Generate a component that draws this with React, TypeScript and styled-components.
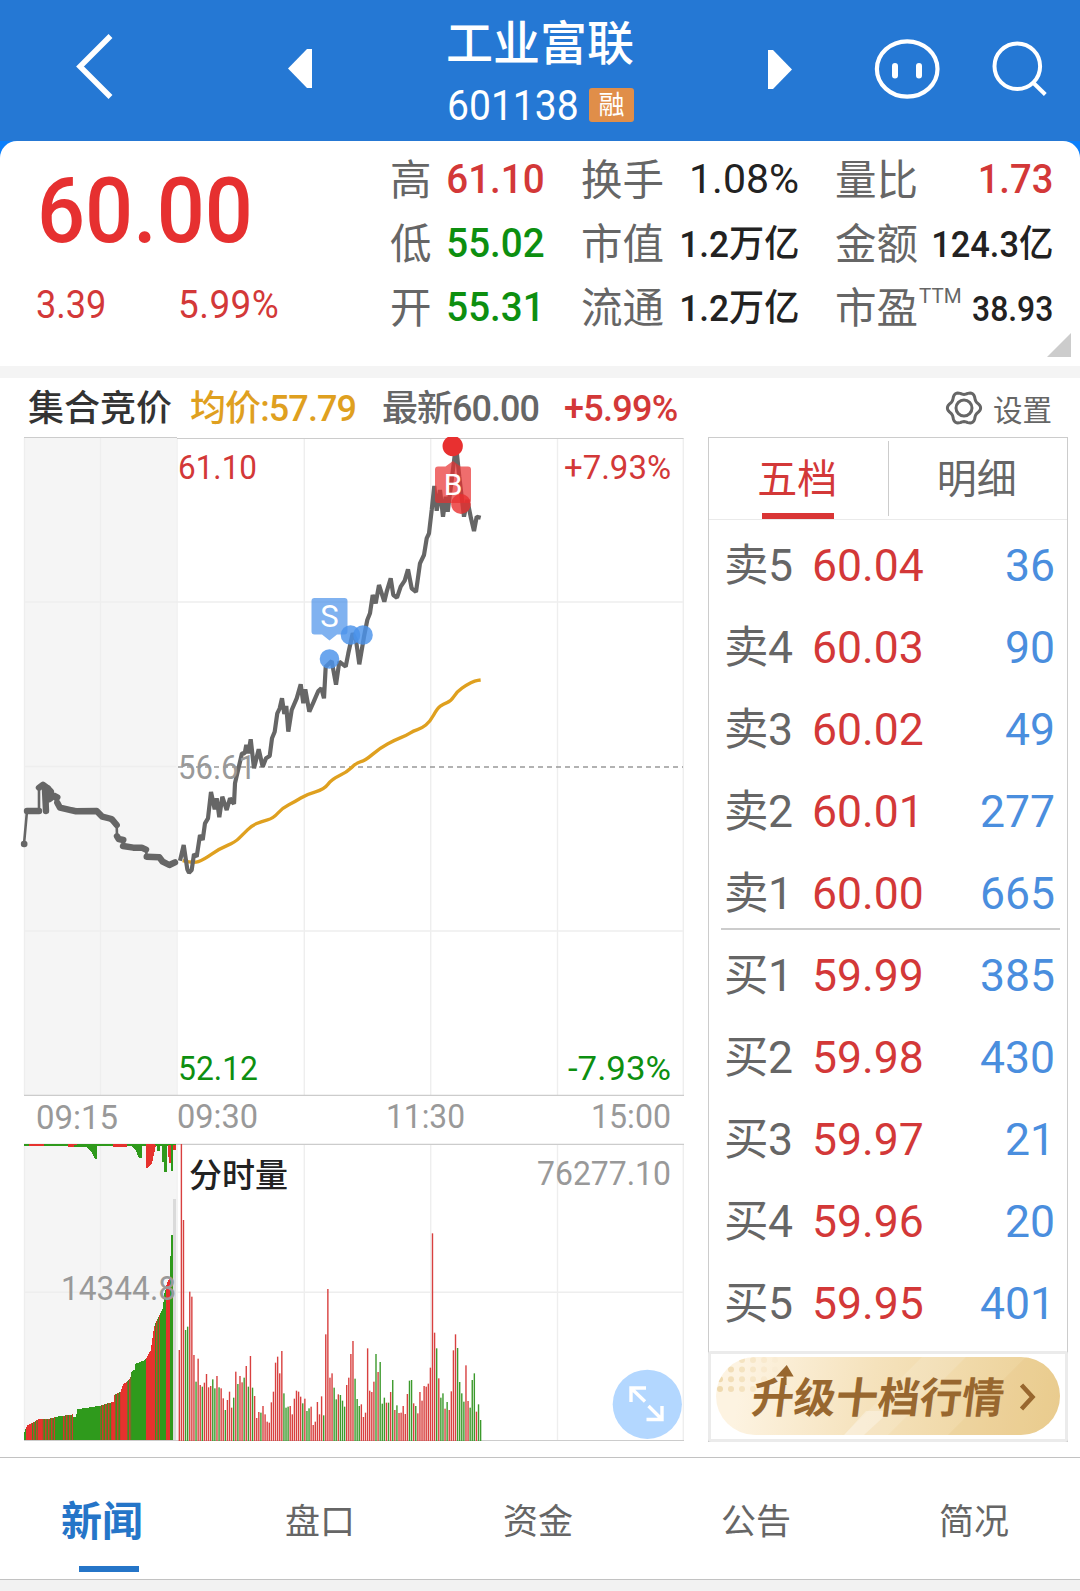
import React from "react";
import styled, { createGlobalStyle } from "styled-components";

const FONT = `Roboto, "Noto Sans CJK SC", sans-serif`;
const C = {
  red: "#d33838",
  green: "#0d8f10",
  ink: "#222",
  grey: "#666",
  soft: "#999",
  line: "#ccc",
  grid: "#eee",
  gold: "#dfa01f",
  blue: "#4a8ede",
};

const Global = createGlobalStyle`
  html, body { margin: 0; padding: 0; background: #fff; }
  * { box-sizing: border-box; }
`;

const Page = styled.div`
  width: 1080px;
  height: 1591px;
  display: flex;
  flex-direction: column;
  overflow: hidden;
  background: #fff;
  font-family: ${FONT};
`;

/* ---------- header ---------- */
const Header = styled.header`
  height: 141px;
  flex: none;
  display: flex;
  background: #2578d4;
`;
const HeadIcon = styled.svg<{ $w: number; $ml: number }>`
  width: ${(p) => p.$w}px;
  height: 141px;
  margin-left: ${(p) => p.$ml}px;
  flex: none;
  overflow: visible;
  fill: none;
  stroke: #fff;
`;
const TitleBlock = styled.div`
  width: 190px;
  margin-left: 134px;
  flex: none;
  color: #fff;
`;
const Title = styled.h1`
  margin: 14px 0 0;
  font-size: 47px;
  line-height: 60px;
  font-weight: 500;
  white-space: nowrap;
`;
const CodeRow = styled.div`
  display: flex;
  align-items: center;
  justify-content: space-between;
  height: 34px;
  margin-top: 14px;
  padding-left: 1px;
  width: 188px;
`;
const Badge = styled.span`
  width: 45px;
  height: 34px;
  border-radius: 3px;
  background: #e08e49;
  font-size: 26px;
  line-height: 35px;
  text-align: center;
`;

const Num = styled.span<{
  $size: number;
  $sx?: number;
  $color?: string;
  $weight?: number;
  $right?: boolean;
  $ls?: number;
}>`
  display: inline-block;
  white-space: nowrap;
  font-size: ${(p) => p.$size}px;
  font-weight: ${(p) => p.$weight ?? 500};
  color: ${(p) => p.$color ?? "inherit"};
  letter-spacing: ${(p) => p.$ls ?? 0}px;
  transform: scaleX(${(p) => p.$sx ?? 0.93});
  transform-origin: ${(p) => (p.$right ? "right" : "left")} center;
`;

/* ---------- quote ---------- */
const QuoteBack = styled.section`
  flex: none;
  height: 237px;
  background: linear-gradient(#0a7ffb 40px, #f4f4f4 40px);
`;
const Quote = styled.div`
  position: relative;
  height: 225px;
  display: flex;
  background: #fff;
  border-radius: 17px 17px 0 0;
`;
const PriceBlock = styled.div`
  width: 390px;
  flex: none;
  padding: 26px 0 0 36px;
`;
const BigPrice = styled.div`
  height: 90px;
  line-height: 90px;
  padding-left: 1px;
`;
const ChangeRow = styled.div`
  display: flex;
  margin-top: 29px;
  line-height: 38px;
`;
const ChangeItem = styled.div`
  width: 142px;
`;
const StatCol = styled.div<{ $w: number; $ml?: number }>`
  width: ${(p) => p.$w}px;
  margin-left: ${(p) => p.$ml ?? 0}px;
  padding-top: 6px;
  flex: none;
`;
const Stat = styled.div`
  height: 64px;
  line-height: 64px;
  display: flex;
  align-items: baseline;
  justify-content: space-between;
`;
const StatLabel = styled.span`
  font-size: 41.5px;
  color: ${C.grey};
  white-space: nowrap;
  transform: translateY(2px);
`;
const Sup = styled.sup`
  font-size: 20.5px;
  line-height: 0;
  vertical-align: 20px;
  margin-left: 1px;
  margin-right: -60px;
`;
const Corner = styled.svg`
  position: absolute;
  right: 9px;
  bottom: 9px;
  width: 24px;
  height: 24px;
`;

/* ---------- body ---------- */
const Body = styled.main`
  flex: none;
  height: 1079px;
  display: flex;
`;
const ChartSide = styled.div`
  width: 708px;
  flex: none;
`;
const Legend = styled.div`
  height: 60px;
  padding-left: 28px;
  line-height: 62px;
  display: flex;
`;
const LegendItem = styled.div<{ $w: number; $color: string; $weight?: number; $ls?: number }>`
  width: ${(p) => p.$w}px;
  color: ${(p) => p.$color};
  font-size: 36px;
  font-weight: ${(p) => p.$weight ?? 500};
  letter-spacing: ${(p) => p.$ls ?? 0}px;
  white-space: nowrap;
`;
const Chart = styled.svg`
  display: block;
  width: 700px;
  height: 1010px;
  overflow: visible;
  font-family: ${FONT};
`;
const BookSide = styled.div`
  width: 360px;
  flex: none;
`;
const Settings = styled.div`
  height: 59px;
  display: flex;
  align-items: center;
  justify-content: flex-end;
  gap: 10px;
  padding-right: 16px;
  font-size: 29.5px;
  color: ${C.grey};
`;
const Book = styled.div`
  height: 1005px;
  border: 1px solid ${C.line};
  display: flex;
  flex-direction: column;
`;
const BookTabs = styled.div`
  height: 82px;
  display: flex;
  flex: none;
  border-bottom: 1px solid #eaeaea;
`;
const BookTab = styled.div<{ $on?: boolean }>`
  position: relative;
  flex: 1;
  text-align: center;
  font-size: 40px;
  line-height: 84px;
  height: 81px;
  padding-right: 2px;
  color: ${(p) => (p.$on ? C.red : C.grey)};
  &::after {
    content: "";
    position: absolute;
    left: 53px;
    bottom: 0;
    width: 72px;
    height: ${(p) => (p.$on ? 6 : 0)}px;
    background: #d93535;
  }
`;
const TabRule = styled.div`
  width: 1px;
  margin: 3px 0;
  background: ${C.line};
`;
const Rows = styled.div`
  padding-top: 5px;
  height: 832px;
  flex: none;
`;
const Row = styled.div`
  height: 82.05px;
  line-height: 82px;
  padding: 0 12px 0 15px;
  display: grid;
  grid-template-columns: 88px 1fr auto;
  font-size: 44.5px;
  white-space: nowrap;
`;
const Side = styled.span`
  color: ${C.grey};
  letter-spacing: -0.5px;
`;
const Price = styled.span`
  color: ${C.red};
`;
const Vol = styled.span`
  color: ${C.blue};
`;
const Mid = styled.div`
  height: 2px;
  margin: -7px 7px 5px 12px;
  background: ${C.line};
`;
const Promo = styled.div`
  flex: 1;
  margin: -1px;
  border: 3px solid #ebebeb;
  border-radius: 3px;
  padding: 3px 4px 3px 5px;
  display: flex;
`;
const Pill = styled.div`
  position: relative;
  width: 344px;
  height: 78px;
  border-radius: 39px;
  overflow: hidden;
  background: linear-gradient(100deg, #fdf3e1 8%, #f5e2bc 45%, #ebcf93 100%);
`;
const PillArt = styled.svg`
  position: absolute;
  inset: 0;
  width: 344px;
  height: 78px;
`;
const PillText = styled.div`
  position: relative;
  padding-left: 36px;
  font-size: 42px;
  line-height: 83px;
  font-weight: 700;
  color: #98672f;
  white-space: nowrap;
  transform: skewX(-7deg);
`;

/* ---------- bottom tabs ---------- */
const Tabs = styled.nav`
  flex: none;
  height: 123px;
  margin: 0 -4px 0 -7px;
  border-top: 1px solid #c2c2c2;
  border-bottom: 1px solid #c2c2c2;
  display: grid;
  grid-template-columns: repeat(5, 218px);
`;
const Tab = styled.div<{ $on?: boolean }>`
  position: relative;
  height: 121px;
  text-align: center;
  line-height: ${(p) => (p.$on ? 128 : 130)}px;
  font-size: ${(p) => (p.$on ? 41 : 35)}px;
  font-weight: ${(p) => (p.$on ? 700 : 400)};
  color: ${(p) => (p.$on ? "#2575c8" : C.grey)};
  &::after {
    content: "";
    position: absolute;
    left: 86px;
    top: 108px;
    width: 60px;
    height: ${(p) => (p.$on ? 6 : 0)}px;
    background: #2575c8;
  }
`;
const Foot = styled.div`
  flex: 1;
  background: #f2f2f2;
`;

/* ---------- chart data ---------- */
type P = [number, number];
const map = (pts: P[], ox: number, oy: number) =>
  pts.map(([x, y]) => `${(ox + x / 3).toFixed(1)},${(oy + y / 3).toFixed(1)}`).join(" ");
const smooth = (pts: P[], ox: number, oy: number) => {
  const q = pts.map(([x, y]) => [ox + x / 3, oy + y / 3]);
  let d = `M${q[0][0]} ${q[0][1]}`;
  for (let i = 1; i < q.length - 1; i++) {
    d += `Q${q[i][0]} ${q[i][1]} ${(q[i][0] + q[i + 1][0]) / 2} ${(q[i][1] + q[i + 1][1]) / 2}`;
  }
  const e = q[q.length - 1];
  return `${d}L${e[0]} ${e[1]}`;
};

const priceA: P[] = [[0,842],[11,795],[22,868],[27,878],[35,870],[42,822],[50,830],[60,765],[68,780],[75,730],[84,715],[93,636],[104,688],[110,655],[118,712],[127,650],[140,690],[150,655],[162,672],[165,610],[172,580],[186,520],[194,520],[199,495],[205,520],[212,478],[222,565],[236,508],[248,560],[258,535],[269,528],[276,475],[284,455],[292,400],[299,385],[306,355],[313,402],[319,378],[325,455],[335,390],[350,355],[362,313],[370,370],[376,328],[388,395],[400,368],[415,333],[424,325],[432,355],[437,260],[455,243],[468,314],[478,245],[497,260],[505,220],[518,160],[528,180],[538,253],[552,170],[562,120],[570,100],[578,45],[587,70],[597,15],[613,65]];
const priceB: P[] = [[20,665],[32,625],[40,675],[51,683],[62,650],[74,632],[84,598],[95,655],[108,666],[120,580],[132,555],[140,505],[147,490],[155,420],[163,348],[170,422],[180,360],[189,440],[197,380],[203,425],[215,330],[228,225],[238,320],[252,440],[262,390],[273,445],[282,483],[290,440],[302,443]];
const avg: P[] = [[8,842],[40,850],[70,840],[120,805],[165,787],[190,762],[215,737],[245,724],[280,715],[308,683],[345,665],[380,643],[433,628],[455,598],[500,577],[530,548],[555,542],[600,504],[645,480],[680,466],[700,453],[725,445],[750,425],[772,385],[790,372],[812,364],[832,334],[860,315],[885,302],[902,300]];
const preThin: P[] = [[72,312],[81,213],[117,213],[117,143],[129,134],[138,145],[138,213],[148,150],[172,188],[180,203],[290,213],[350,255],[351,289],[369,300],[369,318],[438,329],[440,350],[478,352]];
const preThick: P[][] = [
  [[72,312],[73,312]],
  [[81,213],[117,213]],
  [[117,143],[129,134],[143,145]],
  [[135,150],[138,213]],
  [[143,145],[153,155],[148,178],[162,167],[172,172]],
  [[172,188],[180,203],[228,214],[290,213],[307,230],[335,237],[350,255]],
  [[351,289],[356,297],[370,300]],
  [[369,318],[400,323],[425,323],[438,329]],
  [[440,350],[478,352],[488,365],[508,375],[525,367]],
];

const volume = "810r 192r 420r 750g 740g 635r 650r 825r 905g 836r 915r 920g 908r 882r 922r 918r 898g 925g 888r 922g 925r 955r 990g 960r 935r 983r 953g 875r 912g 888r 907r 893g 858r 920g 828r 923g 948r 1014r 996r 998g 978r 1003r 1025r 1028r 967r 935r 848r 830r 880r 813r 940g 983g 980g 978r 1003r 956r 932r 935r 950r 970g 956r 993g 985g 980r 1035r 1025r 966r 1003r 949r 1006g 763r 627r 893r 880r 923g 958g 943r 945g 962g 980g 915r 893r 822r 783r 896g 957g 978g 973r 1011r 998r 805r 932r 936r 905r 822g 876r 846g 971g 953g 968r 968g 936r 900g 990r 976g 999r 998r 978r 1002r 942r 902g 900g 970r 978g 1000r 936r 962r 918r 920r 911r 863r 460r 758r 805g 895r 953g 940g 986r 966g 990r 934r 811r 763r 804g 906g 940g 965g 856r 963r 983g 900g 880g 995r 973g 1020g"
  .split(" ")
  .map((t, i) => ({ x: 179.3 + i * 2.0925, y: 1080 + parseInt(t, 10) / 3, up: t.endsWith("r") }));

const preTop: P[] = [[73,1055],[80,1037],[90,1032],[115,1018],[140,1018],[170,1010],[218,1003],[219,1010],[228,1010],[231,988],[300,977],[340,965],[342,945],[362,935],[368,915],[390,895],[395,873],[403,870],[405,852],[435,840],[452,810],[462,740],[470,720],[488,685],[493,640],[497,625],[500,610],[510,590],[512,465],[520,465]];
const preSeg: [number, string][] = [[78,"g"],[97,"r"],[115,"m"],[127,"r"],[142,"m"],[165,"m"],[190,"g"],[218,"m"],[300,"g"],[336,"m"],[345,"r"],[362,"m"],[380,"r"],[397,"m"],[438,"g"],[466,"r"],[480,"m"],[497,"g"],[511,"r"],[530,"g"]];
const RED = "#e6322e";
const GREEN = "#2f9a1c";
const preBars = Array.from({ length: 149 }, (_, i) => {
  const X = 73 + i * 3;
  let k = 1;
  while (k < preTop.length - 1 && preTop[k][0] < X) k++;
  const [x0, y0] = preTop[k - 1];
  const [x1, y1] = preTop[k];
  const y = y0 + ((y1 - y0) * (X - x0)) / (x1 - x0 || 1);
  const seg = preSeg.find((s) => X < s[0])![1];
  const fill = seg === "r" ? RED : seg === "g" ? GREEN : i % 3 === 0 ? "#cf3a2a" : i % 3 === 1 ? "#7d6a26" : "#3f8f20";
  return { x: 24 + i, y: 1080 + y / 3, fill };
});

const Label: React.FC<{
  x: number; y: number; w: number; fill: string; size?: number; weight?: number; children: string;
}> = ({ x, y, w, fill, size = 34, weight = 400, children }) => (
  <text x={x} y={y} fontSize={size} fontWeight={weight} fill={fill} textLength={w} lengthAdjust="spacingAndGlyphs">
    {children}
  </text>
);

const gear = Array.from({ length: 96 }, (_, i) => {
  const a = (i / 96) * Math.PI * 2;
  const r = 15.1 + 1.5 * Math.cos(6 * a);
  return `${(19 + r * Math.cos(a)).toFixed(2)},${(19 + r * Math.sin(a)).toFixed(2)}`;
}).join(" ");

const IntradayChart = () => (
  <Chart viewBox="0 438 700 1010">
    <rect x="24" y="437" width="152" height="658" fill="#f5f5f5" />
    <rect x="24" y="1144" width="152" height="296" fill="#f5f5f5" />
    <g stroke={C.grid} strokeWidth="1.4">
      {[24.5, 100.5, 177, 304.3, 430.7, 557.5, 683.3].map((x) => (
        <path key={x} d={`M${x} 438V1095M${x} 1144V1440`} />
      ))}
      <path d="M24 602H683M24 931H683M24 766.5H176M24 1292.3H683" />
    </g>
    <g stroke={C.line} strokeWidth="1.2">
      <path d="M24 437.5H177M177 438.5H683.5M24 1095.4H684M24 1144.4H684M24 1440.5H684" />
    </g>
    <path d="M178 767H683" stroke="#999" strokeWidth="1.6" strokeDasharray="5 4" />

    <g shapeRendering="crispEdges">
      {preBars.map((b) => (
        <rect key={b.x} x={b.x} y={b.y} width="1" height={1440 - b.y} fill={b.fill} />
      ))}
      <rect x="173" y="1199" width="3" height="241" fill="#dadada" />
      <path d="M24 1144H176V1146H24Z" fill={GREEN} />
      <path d="M29 1144H44V1146H29ZM68 1144H77V1147H68ZM113 1144H127V1147H113ZM146 1144H155V1146H146Z" fill={RED} />
      <path d="M74 1145H97V1159H95L91 1151L86 1147H74ZM130 1145H142V1158H139L136 1151L132 1147ZM157 1145H160V1151H157ZM162 1145H167V1172H164V1162H162ZM171 1145H173V1171H171Z" fill={GREEN} />
      <path d="M146 1145H156L152 1163L148 1168H146ZM168 1145H171V1163H169V1157H168ZM173 1145H175.5V1150H173Z" fill={RED} />
    </g>
    {volume.map((v) => (
      <rect key={v.x} x={v.x - 0.7} y={v.y} width="1.4" height={1441 - v.y} fill={v.up ? "#d8403f" : "#3c9a2c"} />
    ))}

    <Label x={178} y={479} w={79} fill={C.red}>61.10</Label>
    <Label x={564} y={479} w={107} fill={C.red}>+7.93%</Label>
    <Label x={178} y={1079.500} w={80} fill={C.green}>52.12</Label>
    <Label x={568} y={1079.500} w={103} fill={C.green}>-7.93%</Label>

    <path d={smooth(avg, 180, 580)} fill="none" stroke={C.gold} strokeWidth="3.4" strokeLinejoin="round" />
    <g fill="none" stroke="#666" strokeLinejoin="round">
      <polyline points={map(preThin, 0, 740)} strokeWidth="2.6" />
      <g strokeWidth="6.4" strokeLinecap="round">
        {preThick.map((p, i) => (
          <polyline key={i} points={map(p, 0, 740)} />
        ))}
      </g>
      <polyline points={`${map(priceA, 180, 580)} ${map(priceB, 380, 370)}`} strokeWidth="4.2" strokeLinejoin="bevel" />
    </g>
    <Label x={178} y={779} w={78} fill={C.soft}>56.61</Label>

    <g fill="#4a92ea">
      <path d="M314.5 598H344.5Q347.5 598 347.5 601V631.5Q347.5 634.5 344.5 634.5H337L329.5 640.5L322 634.5H314.5Q311.5 634.5 311.5 631.5V601Q311.5 598 314.5 598Z" opacity=".7" />
      <circle cx="329.5" cy="659" r="9.8" opacity=".82" />
      <circle cx="350.5" cy="635" r="9.8" opacity=".82" />
      <circle cx="363" cy="635" r="9.8" opacity=".82" />
    </g>
    <text x="329.5" y="627" fontSize="31" fill="#fff" textAnchor="middle">S</text>
    <path d="M447.9 437H457.5A10.2 10.2 0 1 1 447.9 437Z" fill="#e83030" />
    <g fill="#e82f2f">
      <path d="M438 466.5H445.5L453 461L460.5 466.5H468Q471 466.5 471 469.5V500Q471 503 468 503H438Q435 503 435 500V469.5Q435 466.5 438 466.5Z" opacity=".7" />
      <circle cx="461" cy="504" r="9.9" opacity=".8" />
    </g>
    <text x="453" y="495" fontSize="30" fill="#fff" textAnchor="middle">B</text>

    <Label x={36} y={1129} w={82} fill={C.soft}>09:15</Label>
    <Label x={177} y={1128} w={81} fill={C.soft}>09:30</Label>
    <Label x={386} y={1128} w={79} fill={C.soft}>11:30</Label>
    <Label x={591} y={1128} w={80} fill={C.soft}>15:00</Label>
    <Label x={189} y={1186.5} w={99} fill={C.ink} size={33} weight={500}>分时量</Label>
    <Label x={537} y={1185} w={134} fill={C.soft}>76277.10</Label>
    <Label x={61} y={1300} w={115} fill={C.soft}>14344.8</Label>

    <circle cx="647.3" cy="1404.3" r="34.6" fill="#b3d7ff" />
    <path d="M631 1402V1388H646M632 1389L645 1401.5M662 1406V1419.5H646.5M661 1418.5L648.5 1406" stroke="#fff" strokeWidth="3.4" fill="none" />
  </Chart>
);

const orders: [string, string, string][] = [
  ["卖5", "60.04", "36"], ["卖4", "60.03", "90"], ["卖3", "60.02", "49"], ["卖2", "60.01", "277"], ["卖1", "60.00", "665"],
  ["买1", "59.99", "385"], ["买2", "59.98", "430"], ["买3", "59.97", "21"], ["买4", "59.96", "20"], ["买5", "59.95", "401"],
];

const dots = [0, 1, 2, 3].flatMap((r) =>
  Array.from({ length: 6 }, (_, c) => ({ x: 4 + c * 11, y: 32 - r * 9.7, o: 1 - c * 0.18 })),
);

export default function App() {
  return (
    <Page>
      <Global />
      <Header>
        <HeadIcon $w={36} $ml={77} viewBox="77 0 36 141" strokeWidth="5.5">
          <path d="M110.500 36L80 66.500L110.500 97" />
        </HeadIcon>
        <HeadIcon $w={24} $ml={175} viewBox="288 0 24 141">
          <path d="M307 49H312V88H307L288 68.500Z" fill="#fff" stroke="none" />
        </HeadIcon>
        <TitleBlock>
          <Title>工业富联</Title>
          <CodeRow>
            <Num $size={42} $sx={0.93} $weight={400}>601138</Num>
            <Badge>融</Badge>
          </CodeRow>
        </TitleBlock>
        <HeadIcon $w={24} $ml={132} viewBox="768 0 24 141">
          <path d="M768 50H773L792 69.500L773 89H768Z" fill="#fff" stroke="none" />
        </HeadIcon>
        <HeadIcon $w={65} $ml={83} viewBox="875 0 65 141" strokeWidth="4.200">
          <ellipse cx="907.200" cy="69" rx="30.300" ry="27.700" />
          <path d="M895 66V75.500M919 66V75.500" strokeWidth="6" strokeLinecap="round" />
        </HeadIcon>
        <HeadIcon $w={55} $ml={52} viewBox="992 0 55 141" strokeWidth="4">
          <circle cx="1017.300" cy="66.300" r="22.800" />
          <path d="M1033 82.500L1045.300 94.500" />
        </HeadIcon>
      </Header>

      <QuoteBack>
        <Quote>
          <PriceBlock>
            <BigPrice><Num $size={90} $sx={0.94} $color="#e63030">60.00</Num></BigPrice>
            <ChangeRow>
              <ChangeItem><Num $size={38} $sx={0.95} $color={C.red} $weight={400}>3.39</Num></ChangeItem>
              <Num $size={38} $sx={0.97} $ls={0.5} $color={C.red} $weight={400}>5.99%</Num>
            </ChangeRow>
          </PriceBlock>
          <StatCol $w={155}>
            <Stat><StatLabel>高</StatLabel><Num $size={41} $right $sx={0.94} $color={C.red}>61.10</Num></Stat>
            <Stat><StatLabel>低</StatLabel><Num $size={41} $right $sx={0.94} $color={C.green}>55.02</Num></Stat>
            <Stat><StatLabel>开</StatLabel><Num $size={41} $right $sx={0.94} $color={C.green}>55.31</Num></Stat>
          </StatCol>
          <StatCol $w={218} $ml={36}>
            <Stat><StatLabel>换手</StatLabel><Num $size={41} $right $color={C.ink} $weight={400} $sx={1}>1.08%</Num></Stat>
            <Stat><StatLabel>市值</StatLabel><Num $size={37} $right $color={C.ink} $sx={0.95}>1.2万亿</Num></Stat>
            <Stat><StatLabel>流通</StatLabel><Num $size={37} $right $color={C.ink} $sx={0.95}>1.2万亿</Num></Stat>
          </StatCol>
          <StatCol $w={218} $ml={36}>
            <Stat><StatLabel>量比</StatLabel><Num $size={41} $right $color={C.red}>1.73</Num></Stat>
            <Stat><StatLabel>金额</StatLabel><Num $size={37} $right $color={C.ink}>124.3亿</Num></Stat>
            <Stat><StatLabel>市盈<Sup>TTM</Sup></StatLabel><Num $size={35} $right $color={C.ink} $sx={0.91}>38.93</Num></Stat>
          </StatCol>
          <Corner viewBox="0 0 24 24"><path d="M24 0V24H0Z" fill="#ccc" /></Corner>
        </Quote>
      </QuoteBack>

      <Body>
        <ChartSide>
          <Legend>
            <LegendItem $w={162} $color="#333">集合竞价</LegendItem>
            <LegendItem $w={192} $color={C.gold} $ls={-0.9}>均价:57.79</LegendItem>
            <LegendItem $w={182} $color={C.grey} $ls={-1}>最新60.00</LegendItem>
            <LegendItem $w={120} $color={C.red} $ls={-0.7}>+5.99%</LegendItem>
          </Legend>
          <IntradayChart />
        </ChartSide>
        <BookSide>
          <Settings>
            <svg width="38" height="38" fill="none" stroke="#666" strokeWidth="3">
              <polygon points={gear} strokeLinejoin="round" />
              <circle cx="19" cy="19" r="8" />
            </svg>
            <span>设置</span>
          </Settings>
          <Book>
            <BookTabs>
              <BookTab $on>五档</BookTab>
              <TabRule />
              <BookTab>明细</BookTab>
            </BookTabs>
            <Rows>
              {orders.map(([s, p, v], i) => (
                <React.Fragment key={s}>
                  {i === 5 && <Mid />}
                  <Row><Side>{s}</Side><Price>{p}</Price><Vol>{v}</Vol></Row>
                </React.Fragment>
              ))}
            </Rows>
            <Promo>
              <Pill>
                <PillArt viewBox="0 0 344 78">
                  {dots.map((d, i) => (
                    <circle key={i} cx={d.x} cy={d.y} r="3" fill="#efd9ae" opacity={d.o} />
                  ))}
                  <path d="M128 78L206 0H250L172 78Z" fill="#fff" opacity=".13" />
                  <path d="M128 78L150 54L174 54L148 78Z" fill="#fff" opacity=".3" />
                  <path d="M232 78L310 0H344V78Z" fill="#e2bd74" opacity=".18" />
                  <path d="M69 28V17M63.500 18L70.500 10.500L75 18Z" stroke="#98672f" strokeWidth="3" fill="#98672f" />
                  <path d="M305.500 28L316.500 40L305.500 52" stroke="#98672f" strokeWidth="4.500" fill="none" />
                </PillArt>
                <PillText>升级十档行情</PillText>
              </Pill>
            </Promo>
          </Book>
        </BookSide>
      </Body>

      <Tabs>
        <Tab $on>新闻</Tab>
        <Tab>盘口</Tab>
        <Tab>资金</Tab>
        <Tab>公告</Tab>
        <Tab>简况</Tab>
      </Tabs>
      <Foot />
    </Page>
  );
}
